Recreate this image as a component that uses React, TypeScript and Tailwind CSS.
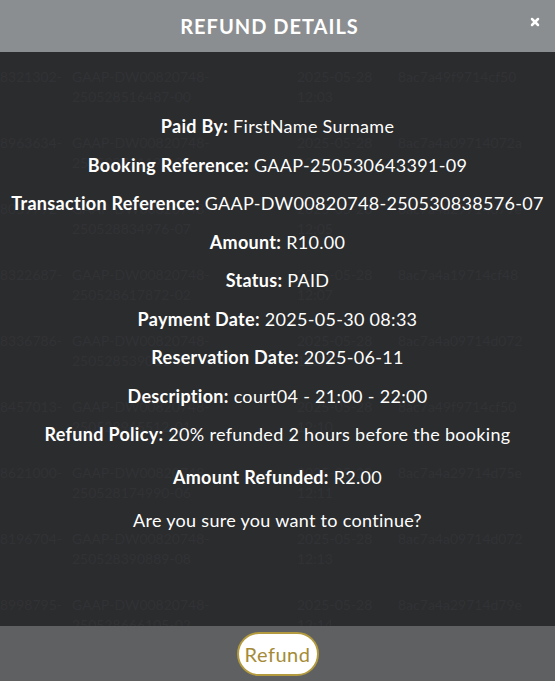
import React from 'react'
import { X } from 'lucide-react'

type Row = { id: string; ref1: string; ref2: string; date: string; time: string; hash: string }

const rows: Row[] = [
  { id: '8310245-', ref1: 'GAAP-DW00820748-', ref2: '250528412230-04', date: '2025-05-28', time: '12:01', hash: '8ac7a4a19714c0f2' },
  { id: '8321302-', ref1: 'GAAP-DW00820748-', ref2: '250528516487-00', date: '2025-05-28', time: '12:03', hash: '8ac7a49f9714cf50' },
  { id: '8963634-', ref1: 'GAAP-DW00820748-', ref2: '250528721194-03', date: '2025-05-28', time: '12:04', hash: '8ac7a4a09714072a' },
  { id: '8059792-', ref1: 'GAAP-DW00820748-', ref2: '250528834976-07', date: '2025-05-28', time: '12:05', hash: '8ac7a4a29714d79e' },
  { id: '8322687-', ref1: 'GAAP-DW00820748-', ref2: '250528617872-02', date: '2025-05-28', time: '12:07', hash: '8ac7a4a19714cf48' },
  { id: '8336786-', ref1: 'GAAP-DW00820748-', ref2: '250528539061-05', date: '2025-05-28', time: '12:08', hash: '8ac7a4a09714d072' },
  { id: '8457013-', ref1: 'GAAP-DW00820748-', ref2: '250528965512-01', date: '2025-05-28', time: '12:10', hash: '8ac7a49f9714cf50' },
  { id: '8621000-', ref1: 'GAAP-DW00820748-', ref2: '250528174990-06', date: '2025-05-28', time: '12:11', hash: '8ac7a4a29714d75e' },
  { id: '8196704-', ref1: 'GAAP-DW00820748-', ref2: '250528390889-08', date: '2025-05-28', time: '12:13', hash: '8ac7a4a09714d072' },
  { id: '8998795-', ref1: 'GAAP-DW00820748-', ref2: '250528666105-02', date: '2025-05-28', time: '12:14', hash: '8ac7a4a29714d79e' },
]

const details: [string, string][] = [
  ['Paid By:', 'FirstName Surname'],
  ['Booking Reference:', 'GAAP-250530643391-09'],
  ['Transaction Reference:', 'GAAP-DW00820748-250530838576-07'],
  ['Amount:', 'R10.00'],
  ['Status:', 'PAID'],
  ['Payment Date:', '2025-05-30 08:33'],
  ['Reservation Date:', '2025-06-11'],
  ['Description:', 'court04 - 21:00 - 22:00'],
  ['Refund Policy:', '20% refunded 2 hours before the booking'],
]

export default function App() {
  return (
    <div className="relative h-[681px] w-[555px] overflow-hidden bg-[#2b2c2e] font-['Lato',sans-serif]">
      {/* page underneath the dialog */}
      <div className="pt-[1px] text-[14px] leading-[20px] text-[#313235]">
        {rows.map((r) => (
          <div key={r.id + r.ref2} className="flex h-[66px]">
            <div className="w-[72px] shrink-0">{r.id}</div>
            <div className="w-[225px] shrink-0">
              <div>{r.ref1}</div>
              <div>{r.ref2}</div>
            </div>
            <div className="w-[101px] shrink-0">
              <div>{r.date}</div>
              <div>{r.time}</div>
            </div>
            <div className="whitespace-nowrap">{r.hash}</div>
          </div>
        ))}
      </div>

      {/* dialog */}
      <div className="absolute inset-0 flex flex-col">
        <div className="relative flex h-[52px] shrink-0 items-center justify-center bg-[#8b8e91] pr-[16px]">
          <h2 className="text-[20px] font-bold tracking-[1px] text-white">REFUND DETAILS</h2>
          <button className="absolute right-[14px] top-[16px] text-white">
            <X size={12} strokeWidth={5} />
          </button>
        </div>

        <div className="flex flex-1 flex-col items-center pt-[62px] text-[18px] leading-[24px] tracking-[0.3px] text-white">
          <div className="flex flex-col items-center gap-[14.5px]">
            {details.map(([label, value]) => (
              <p key={label} className="whitespace-nowrap">
                <span className="font-bold">{label}</span> {value}
              </p>
            ))}
          </div>
          <p className="mt-[19px] whitespace-nowrap">
            <span className="font-bold">Amount Refunded:</span> R2.00
          </p>
          <p className="mt-[19px]">Are you sure you want to continue?</p>
        </div>

        <div className="flex h-[55px] shrink-0 items-center justify-center bg-[#5e6062]">
          <button className="h-[44px] w-[82px] rounded-full border-2 border-[#b39a3e] bg-white text-[20px] tracking-[0.5px] text-[#a58b37]">
            Refund
          </button>
        </div>
      </div>
    </div>
  )
}
